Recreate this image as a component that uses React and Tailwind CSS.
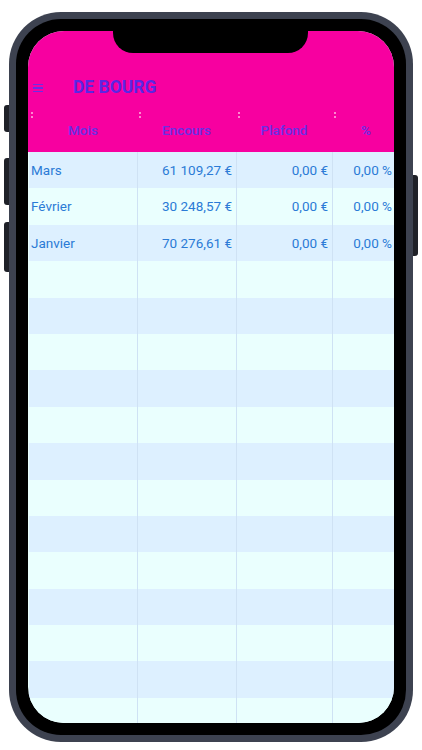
import React from "react";

// données du tableau : mois / encours / plafond / %
const rows = [
  { mois: "Mars", encours: "61 109,27 €", plafond: "0,00 €", pct: "0,00 %" },
  { mois: "Février", encours: "30 248,57 €", plafond: "0,00 €", pct: "0,00 %" },
  { mois: "Janvier", encours: "70 276,61 €", plafond: "0,00 €", pct: "0,00 %" },
];

const cols = "grid grid-cols-[108px_99px_96px_68px]";

function SortHandle() {
  return (
    <div className="flex flex-col gap-[2px] pl-[2px]">
      <span className="block w-[2px] h-[2px] rounded-full bg-[#ffb3e0]" />
      <span className="block w-[2px] h-[2px] rounded-full bg-[#ffb3e0]" />
    </div>
  );
}

export default function App() {
  const filler = Array.from({ length: 16 }, (_, i) => rows[i] || null);

  return (
    <div
      className="w-[422px] h-[750px] bg-white overflow-hidden pt-[12px] pl-[9px]"
      style={{ fontFamily: "Roboto, 'Noto Sans', sans-serif" }}
    >
      {/* cadre du téléphone */}
      <div className="relative w-[404px] h-[730px] rounded-[52px] bg-[#3d4250] p-[7px]">
        {/* boutons latéraux */}
        <div className="absolute left-[-5px] top-[93px] w-[5px] h-[27px] rounded-l-[3px] bg-[#1f2128]" />
        <div className="absolute left-[-5px] top-[146px] w-[5px] h-[47px] rounded-l-[3px] bg-[#1f2128]" />
        <div className="absolute left-[-5px] top-[210px] w-[5px] h-[50px] rounded-l-[3px] bg-[#1f2128]" />
        <div className="absolute right-[-5px] top-[163px] w-[5px] h-[81px] rounded-r-[3px] bg-[#1f2128]" />

        <div className="w-full h-full rounded-[45px] bg-black p-[12px]">
          {/* écran */}
          <div className="relative w-full h-full rounded-[36px] overflow-hidden bg-[#eafffe] flex flex-col">
            {/* encoche */}
            <div className="absolute top-0 left-[85px] w-[195px] h-[22px] bg-black rounded-b-[20px]" />

            {/* en-tête rose */}
            <div className="h-[121px] bg-[#f700a0] flex flex-col shrink-0">
              <div className="h-[49px]" />
              <div className="flex items-center h-[16px]">
                <div className="ml-[5px] flex flex-col gap-[2px] w-[10px]">
                  <span className="block h-[1.5px] bg-[#6a2ee6]" />
                  <span className="block h-[1.5px] bg-[#6a2ee6]" />
                  <span className="block h-[1.5px] bg-[#6a2ee6]" />
                </div>
                <h1 className="ml-[30px] text-[17.5px] font-bold text-[#5a26e4] leading-none">
                  DE BOURG
                </h1>
              </div>
              <div className={`${cols} pl-px mt-[16px]`}>
                <SortHandle />
                <SortHandle />
                <SortHandle />
                <SortHandle />
              </div>
              <div className={`${cols} pl-px mt-[6px] text-[13.5px] font-medium text-[#6a2ee6] leading-none`}>
                <div className="text-center">Mois</div>
                <div className="text-center">Encours</div>
                <div className="text-center">Plafond</div>
                <div className="text-center">%</div>
              </div>
            </div>

            {/* lignes du tableau */}
            <div className="flex flex-col pl-px">
              {filler.map((r, i) => (
                <div
                  key={i}
                  className={`${cols} h-[36.4px] shrink-0 text-[13.5px] text-[#2b7bd6] ${
                    i % 2 === 0 ? "bg-[#ddf0ff]" : "bg-[#eafffe]"
                  }`}
                >
                  <div className="flex items-center pl-[2px]">{r ? r.mois : ""}</div>
                  <div className="flex items-center justify-end pr-[4px] border-l border-[#cfe2f4] whitespace-nowrap">
                    {r ? r.encours : ""}
                  </div>
                  <div className="flex items-center justify-end pr-[4px] border-l border-[#cfe2f4] whitespace-nowrap">
                    {r ? r.plafond : ""}
                  </div>
                  <div className="flex items-center justify-end pr-[8px] border-l border-[#cfe2f4] whitespace-nowrap">
                    {r ? r.pct : ""}
                  </div>
                </div>
              ))}
            </div>
          </div>
        </div>
      </div>
    </div>
  );
}
